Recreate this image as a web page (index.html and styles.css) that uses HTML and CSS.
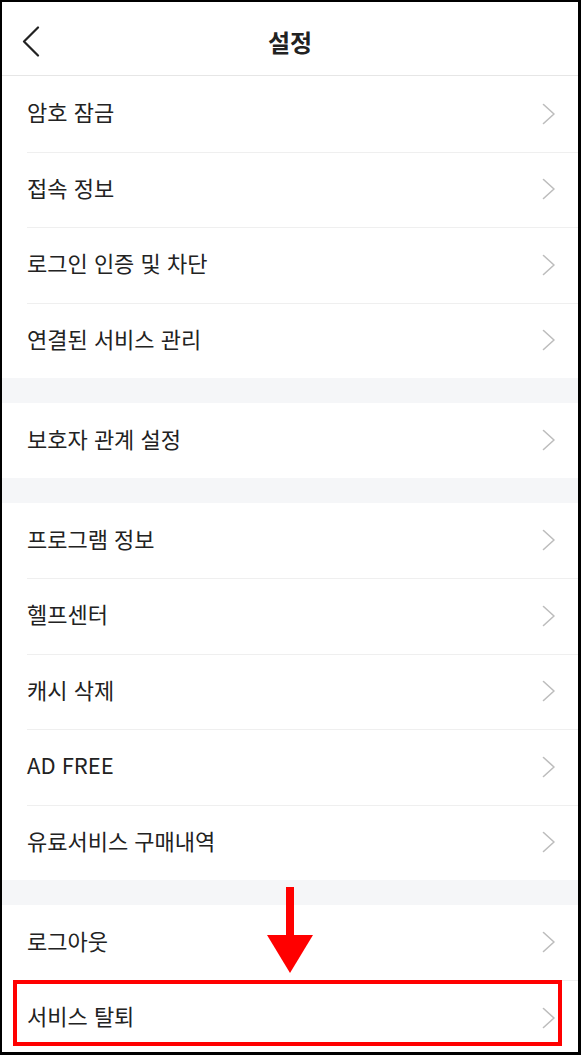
FILE: index.html
```html
<!DOCTYPE html>
<html lang="ko">
<head>
<meta charset="utf-8">
<title>설정</title>
<link rel="stylesheet" href="styles.css">
</head>
<body>
<div class="frame">
  <header class="header">
    <div class="back">
      <svg width="18" height="31" viewBox="0 0 18 31"><path d="M16 1.5 L2 15.5 L16 29.5" fill="none" stroke="#222" stroke-width="2.2" stroke-linecap="round" stroke-linejoin="round"/></svg>
    </div>
    <h1 class="title">설정</h1>
    <div></div>
  </header>

  <section class="group">
    <div class="row"><span class="label">암호 잠금</span><span class="chev"></span></div>
    <div class="row"><span class="label">접속 정보</span><span class="chev"></span></div>
    <div class="row"><span class="label">로그인 인증 및 차단</span><span class="chev"></span></div>
    <div class="row"><span class="label">연결된 서비스 관리</span><span class="chev"></span></div>
  </section>

  <section class="group">
    <div class="row"><span class="label">보호자 관계 설정</span><span class="chev"></span></div>
  </section>

  <section class="group">
    <div class="row"><span class="label">프로그램 정보</span><span class="chev"></span></div>
    <div class="row"><span class="label">헬프센터</span><span class="chev"></span></div>
    <div class="row"><span class="label">캐시 삭제</span><span class="chev"></span></div>
    <div class="row"><span class="label">AD FREE</span><span class="chev"></span></div>
    <div class="row"><span class="label">유료서비스 구매내역</span><span class="chev"></span></div>
  </section>

  <section class="group">
    <div class="row"><span class="label">로그아웃</span><span class="chev"></span></div>
    <div class="row"><span class="label">서비스 탈퇴</span><span class="chev"></span></div>
  </section>

  <div class="highlight"></div>
  <svg class="arrow" width="46" height="86" viewBox="0 0 46 86">
    <rect x="19" y="0" width="8" height="49" fill="#ff0000"/>
    <polygon points="0,48 46,48 23,86" fill="#ff0000"/>
  </svg>
</div>

<svg width="0" height="0" style="position:absolute">
  <defs>
    <symbol id="c" viewBox="0 0 14 22"><path d="M1.5 1.5 L12 11 L1.5 20.5" fill="none" stroke="#bdbdbd" stroke-width="1.6" stroke-linecap="round" stroke-linejoin="round"/></symbol>
  </defs>
</svg>
<script>
document.querySelectorAll('.chev').forEach(function(el){
  el.innerHTML = '<svg width="14" height="22"><use href="#c"/></svg>';
});
</script>
</body>
</html>
```

FILE: styles.css
```css
* { box-sizing: border-box; }
html, body { margin: 0; padding: 0; background: #fff; }
body {
  font-family: "Noto Sans CJK KR", "Noto Sans", sans-serif;
  color: #222;
}
.frame {
  position: relative;
  width: 581px;
  height: 1055px;
  border: 2px solid #000;
  border-right-width: 3px;
  border-bottom-width: 3px;
  background: #f5f6f8;
  overflow: hidden;
}
.header {
  display: grid;
  grid-template-columns: 1fr auto 1fr;
  align-items: center;
  height: 74px;
  padding-top: 6px;
  background: #fff;
  border-bottom: 1px solid #e6e6e6;
}
.back {
  padding-left: 20px;
  display: flex;
  align-items: center;
}
.back svg { display: block; }
.title {
  margin: 0;
  font-size: 24px;
  font-weight: 700;
  color: #222;
  line-height: 1;
}
.group {
  background: #fff;
  margin-bottom: 24.5px;
}
.row {
  position: relative;
  height: 75.5px;
  display: flex;
  align-items: center;
  justify-content: space-between;
  padding: 0 22px 0 25px;
}
.row + .row::before {
  content: "";
  position: absolute;
  left: 25px;
  right: 0;
  top: 0;
  height: 1px;
  background: #efefef;
}
.label {
  font-size: 22px;
  font-weight: 400;
  color: #222;
  line-height: 1;
  margin-top: -5px;
}
.chev { display: flex; align-items: center; }
.chev svg { display: block; }
.highlight {
  position: absolute;
  left: 11px;
  top: 978px;
  width: 549px;
  height: 66px;
  border: 4px solid #ff0000;
}
.arrow {
  position: absolute;
  left: 265px;
  top: 885px;
}
```
